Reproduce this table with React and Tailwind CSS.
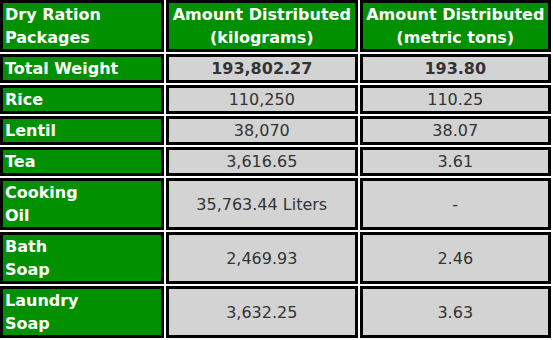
import React from 'react';

const rows = [
  { name: ['Rice'], kg: '110,250', tons: '110.25' },
  { name: ['Lentil'], kg: '38,070', tons: '38.07' },
  { name: ['Tea'], kg: '3,616.65', tons: '3.61' },
  { name: ['Cooking', 'Oil'], kg: '35,763.44 Liters', tons: '-' },
  { name: ['Bath', 'Soap'], kg: '2,469.93', tons: '2.46' },
  { name: ['Laundry', 'Soap'], kg: '3,632.25', tons: '3.63' },
];

const head = 'border-[3px] border-black bg-[#009000] text-white font-bold px-[2px] py-0';
const cell = 'border-[3px] border-black bg-[#d3d3d3] text-[#333333] text-center py-0';

export default function App() {
  return (
    <div className="bg-white w-[553px] h-[340px] overflow-hidden font-['DejaVu_Sans',Verdana,sans-serif] text-[16px] leading-[23px]">
      <table className="w-[555px] border-separate border-spacing-[2px] -ml-[2px] -mt-[2px]">
        <tbody>
          <tr>
            <th className={`${head} text-left w-[164px]`}>
              Dry Ration
              <br />
              Packages
            </th>
            <th className={`${head} text-center`}>
              Amount Distributed
              <br />
              (kilograms)
            </th>
            <th className={`${head} text-center`}>
              Amount Distributed
              <br />
              (metric tons)
            </th>
          </tr>
          <tr>
            <td className={`${head} text-left`}>Total Weight</td>
            <td className={`${cell} font-bold`}>193,802.27</td>
            <td className={`${cell} font-bold`}>193.80</td>
          </tr>
          {rows.map((r) => (
            <tr key={r.kg}>
              <td className={`${head} text-left`}>
                {r.name.map((n, i) => (
                  <React.Fragment key={n}>
                    {i > 0 && <br />}
                    {n}
                  </React.Fragment>
                ))}
              </td>
              <td className={cell}>{r.kg}</td>
              <td className={cell}>{r.tons}</td>
            </tr>
          ))}
        </tbody>
      </table>
    </div>
  );
}
